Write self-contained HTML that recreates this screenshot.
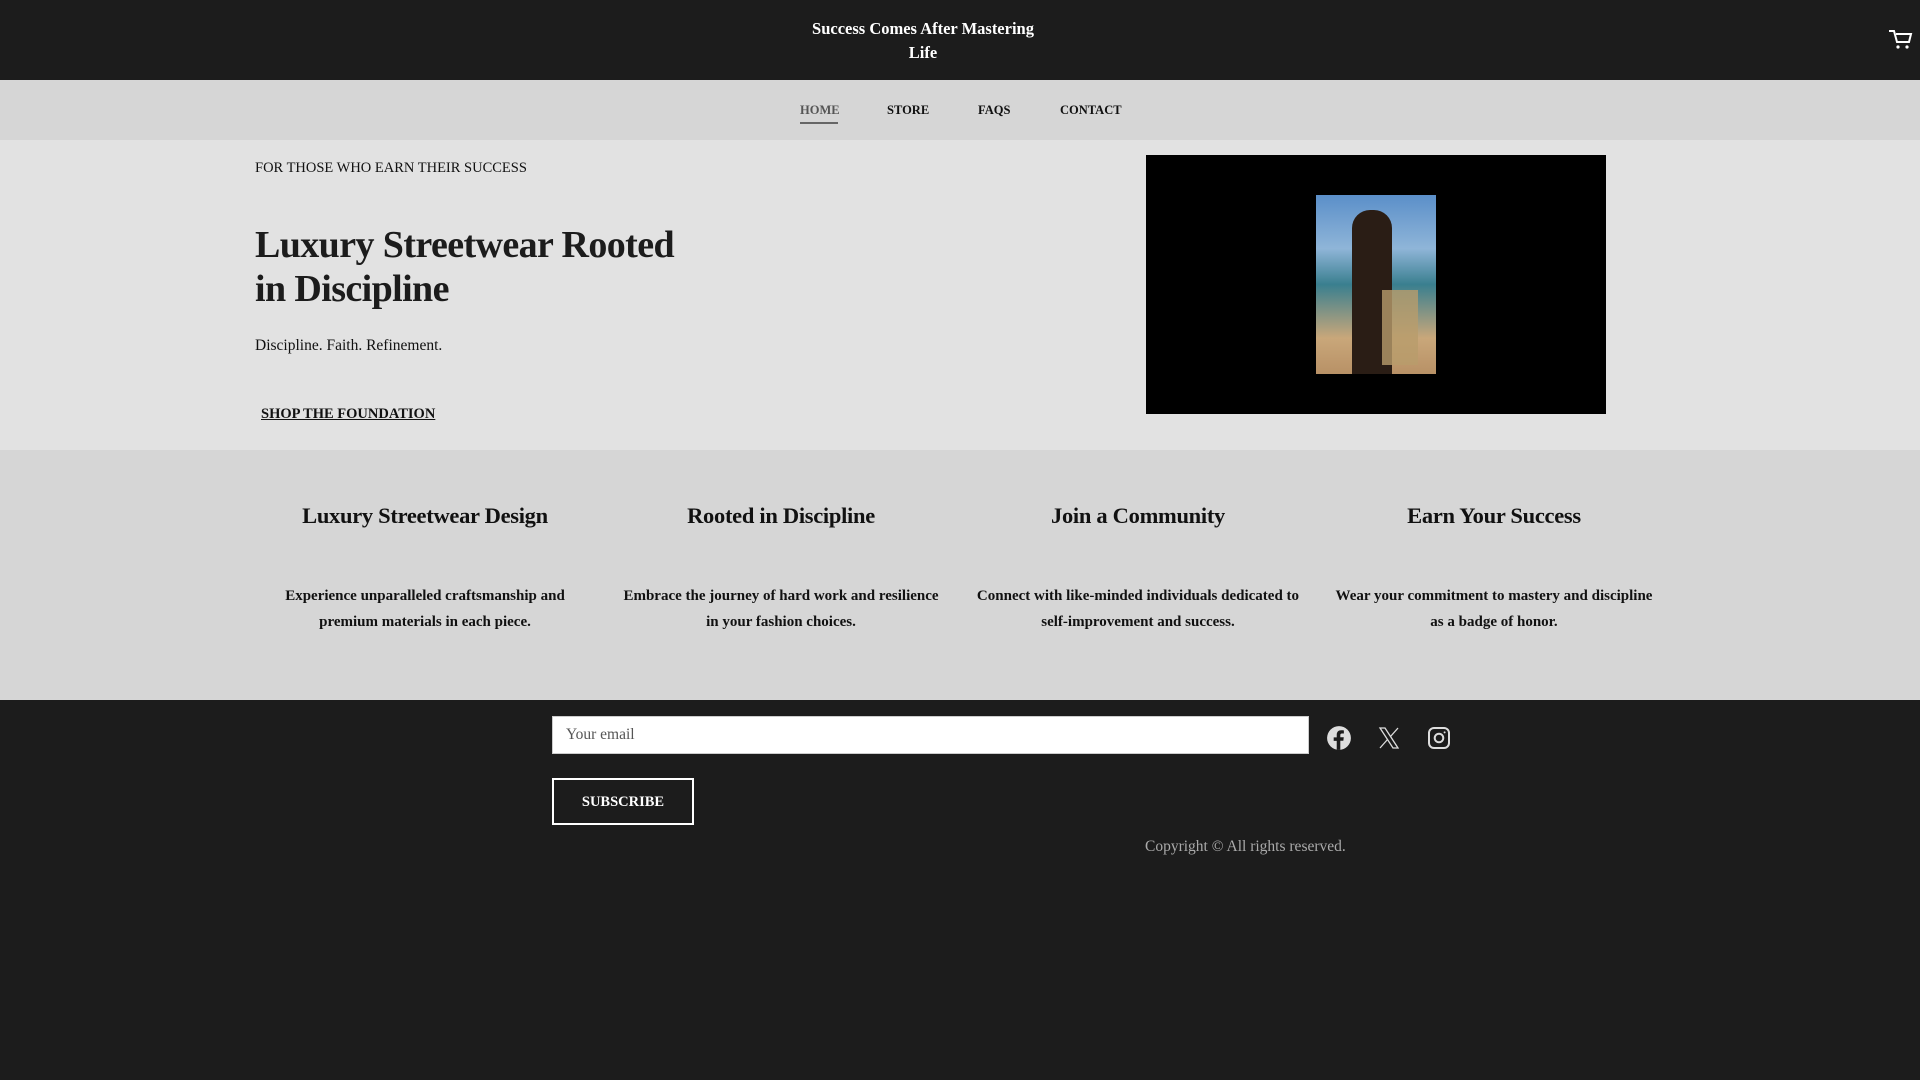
<!DOCTYPE html>
<html><head><meta charset="utf-8"><style>
*{margin:0;padding:0;box-sizing:border-box}
body{width:1920px;height:1080px;overflow:hidden;font-family:"Liberation Serif",serif;background:#1c1c1c;position:relative;color:#111}
.a{position:absolute}
#hdr{left:0;top:0;width:1920px;height:80px;background:#1c1c1c}
#nav{left:0;top:80px;width:1920px;height:60px;background:#d6d6d6}
#hero{left:0;top:140px;width:1920px;height:310px;background:#e2e2e2}
#feat{left:0;top:450px;width:1920px;height:250px;background:#d6d6d6}
.nav{top:103px;font-size:12.5px;font-weight:bold;letter-spacing:0}
.col{width:356px;text-align:center}
.col h3{font-size:22.5px;font-weight:bold;margin-top:53px;letter-spacing:-0.3px}
.col p{font-size:15px;line-height:26px;margin:54px auto 0;width:330px;font-weight:bold}
</style></head><body>
<div class="a" id="hdr"></div>
<div class="a" style="left:803px;top:17px;width:240px;text-align:center;color:#fff;font-size:16.5px;font-weight:bold;line-height:24px">Success Comes After Mastering<br>Life</div>
<svg class="a" style="left:1887px;top:28px" width="26" height="24" viewBox="0 0 26 24" fill="none" stroke="#fff" stroke-width="2"><path d="M2 3h5l3 11h12l2-8H9"/><circle cx="11" cy="19" r="1.6" fill="#fff" stroke="none"/><circle cx="20" cy="19" r="1.6" fill="#fff" stroke="none"/></svg>
<div class="a" id="nav"></div>
<div class="a nav" style="left:800px;color:#555">HOME</div>
<div class="a" style="left:800px;top:122px;width:38px;height:2px;background:#666"></div>
<div class="a nav" style="left:887px">STORE</div>
<div class="a nav" style="left:978px">FAQS</div>
<div class="a nav" style="left:1060px">CONTACT</div>
<div class="a" id="hero"></div>
<div class="a" style="left:255px;top:160px;font-size:14.5px">FOR THOSE WHO EARN THEIR SUCCESS</div>
<div class="a" style="left:255px;top:223px;font-size:38px;line-height:44px;font-weight:bold;color:#1c1c1c;letter-spacing:-0.6px">Luxury Streetwear Rooted<br>in Discipline</div>
<div class="a" style="left:255px;top:337px;font-size:15.5px">Discipline. Faith. Refinement.</div>
<div class="a" style="left:261px;top:406px;font-size:14.5px;font-weight:bold;text-decoration:underline">SHOP THE FOUNDATION</div>
<div class="a" style="left:1146px;top:155px;width:460px;height:259px;background:#000"></div>
<div class="a" style="left:1316px;top:195px;width:120px;height:179px;background:linear-gradient(180deg,#5b8fc9 0%,#8fb5d8 30%,#3a7f8f 50%,#c9a77a 80%,#b89166 100%)"></div>
<div class="a" style="left:1352px;top:210px;width:40px;height:164px;background:#2a1d15;border-radius:18px 18px 0 0"></div>
<div class="a" style="left:1382px;top:290px;width:36px;height:75px;background:#b89c6c;opacity:.8"></div>
<div class="a" id="feat"></div>
<div class="a col" style="left:247px;top:450px"><h3>Luxury Streetwear Design</h3><p>Experience unparalleled craftsmanship and premium materials in each piece.</p></div>
<div class="a col" style="left:603px;top:450px"><h3>Rooted in Discipline</h3><p>Embrace the journey of hard work and resilience in your fashion choices.</p></div>
<div class="a col" style="left:960px;top:450px"><h3>Join a Community</h3><p>Connect with like-minded individuals dedicated to self-improvement and success.</p></div>
<div class="a col" style="left:1316px;top:450px"><h3>Earn Your Success</h3><p>Wear your commitment to mastery and discipline as a badge of honor.</p></div>
<div class="a" style="left:552px;top:716px;width:757px;height:38px;background:#fff;border:1px solid #ccc;font-size:15.5px;color:#555;padding:9px 13px">Your email</div>
<svg class="a" style="left:1326px;top:725px" width="26" height="26" viewBox="0 0 24 24"><circle cx="12" cy="12" r="11" fill="#ddd"/><path d="M13.2 23V14.5h2.8l.4-3.2h-3.2V9.4c0-.9.3-1.6 1.6-1.6h1.7V5c-.3 0-1.3-.1-2.5-.1-2.5 0-4.1 1.5-4.1 4.2v2.3H7.1v3.2h2.8V23z" fill="#1c1c1c"/></svg>
<svg class="a" style="left:1377px;top:726px" width="24" height="24" viewBox="0 0 24 24" fill="none" stroke="#ddd" stroke-width="1.3"><path d="M3 2h5l13 20h-5z"/><path d="M21 2l-7.5 8.5M3 22l7.5-8.5"/></svg>
<svg class="a" style="left:1427px;top:726px" width="24" height="24" viewBox="0 0 24 24" fill="none" stroke="#ddd" stroke-width="2"><rect x="2" y="2" width="20" height="20" rx="5"/><circle cx="12" cy="12" r="4.3"/><circle cx="17.6" cy="6.4" r="1" fill="#ddd" stroke="none"/></svg>
<div class="a" style="left:552px;top:778px;width:142px;height:47px;border:2px solid #fff;color:#fff;font-size:14.5px;font-weight:bold;text-align:center;line-height:44px">SUBSCRIBE</div>
<div class="a" style="left:1145px;top:838px;font-size:15.5px;color:#aaa">Copyright © All rights reserved.</div>
</body></html>
